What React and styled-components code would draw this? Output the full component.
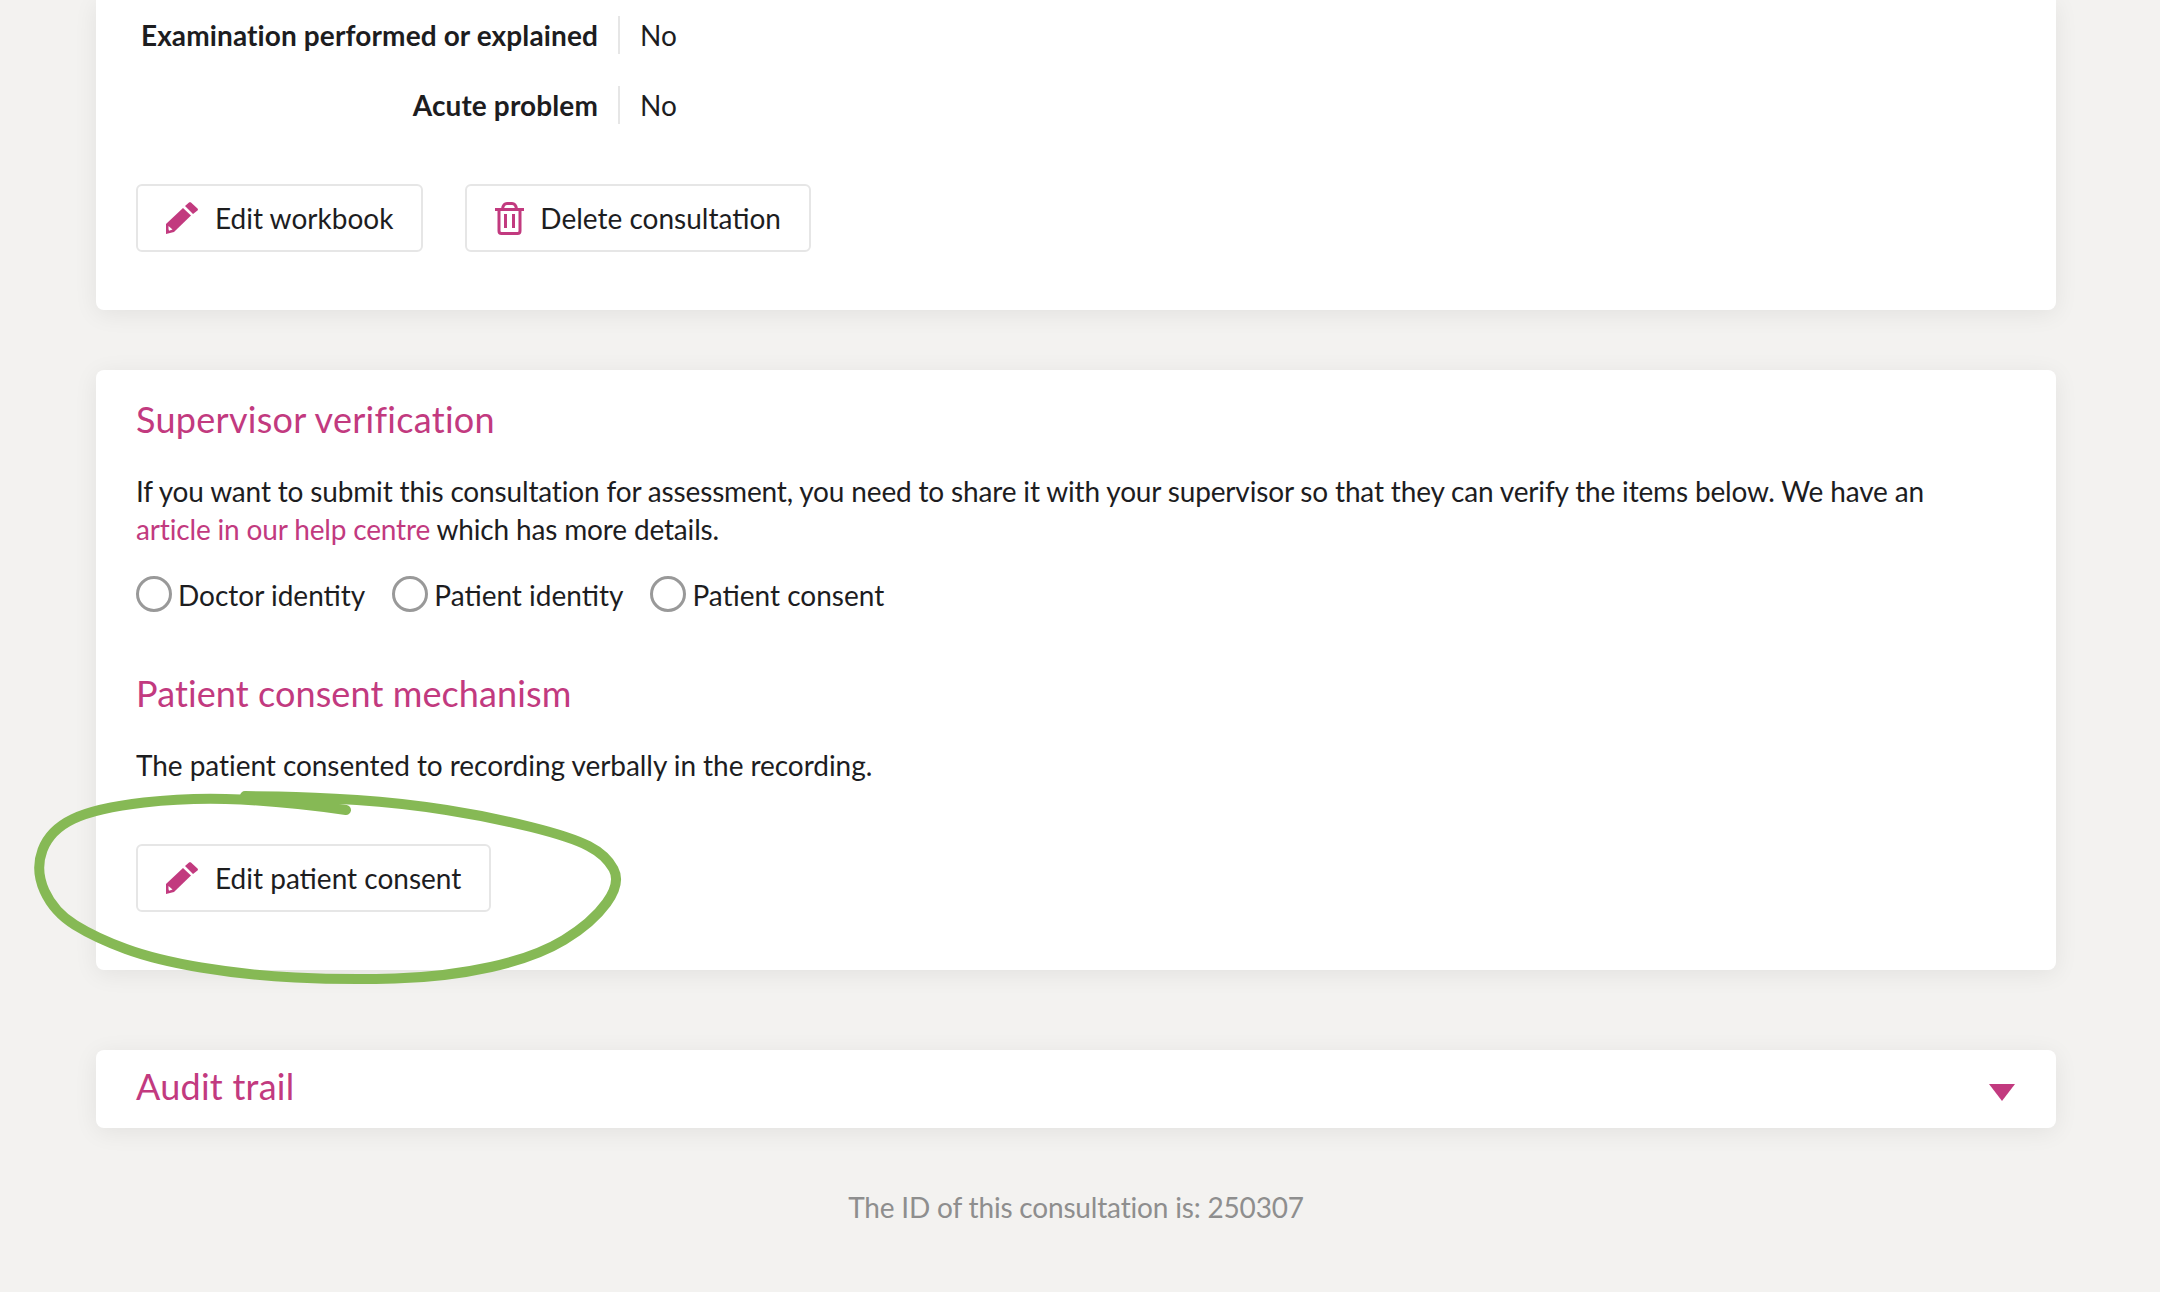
import React from 'react';
import styled, { createGlobalStyle } from 'styled-components';

const PINK = '#c23a7f';

const GlobalStyle = createGlobalStyle`
  html, body {
    margin: 0;
    padding: 0;
    background: #f3f2f0;
    font-family: Lato, "Open Sans", sans-serif;
    color: #1d1d1f;
  }
`;

const Page = styled.div`
  position: relative;
  height: 1292px;
  overflow: hidden;
  padding: 0 104px 0 96px;
  display: flex;
  flex-direction: column;
`;

const Card = styled.section`
  background: #fff;
  border-radius: ${props => (props.$top ? '0 0 8px 8px' : '8px')};
  box-shadow: 0 4px 24px rgba(0, 0, 0, 0.07);
  padding: ${props => props.$padding};
  margin-bottom: ${props => props.$gap || '0'};
`;

const FactRow = styled.div`
  display: flex;
  height: 38px;
  margin-bottom: 32px;
`;

const FactLabel = styled.div`
  width: 482px;
  padding-right: 20px;
  box-sizing: border-box;
  text-align: right;
  font-size: 28px;
  line-height: 38px;
  font-weight: 700;
  letter-spacing: 0.12px;
`;

const FactValue = styled.div`
  border-left: 2px solid #e6e6e6;
  padding-left: 20px;
  font-size: 28px;
  line-height: 38px;
`;

const ButtonRow = styled.div`
  display: flex;
  gap: 42px;
  margin-top: ${props => props.$top};
`;

const Button = styled.button`
  display: flex;
  align-items: center;
  height: 68px;
  padding: 0 28px;
  gap: ${props => props.$gap};
  background: #fff;
  border: 2px solid #e6e6e6;
  border-radius: 6px;
  font-family: inherit;
  font-size: 28px;
  color: #1d1d1f;
`;

const Heading = styled.h2`
  margin: ${props => props.$margin};
  font-size: 36px;
  line-height: 44px;
  font-weight: 400;
  letter-spacing: ${props => props.$tracking || '0.1px'};
  color: ${PINK};
`;

const Paragraph = styled.p`
  margin: ${props => props.$margin};
  max-width: 1800px;
  font-size: 28px;
  line-height: 38px;
  letter-spacing: ${props => props.$tracking};
`;

const TextLink = styled.a`
  color: ${PINK};
  text-decoration: none;
`;

const Checks = styled.div`
  display: flex;
  gap: 27px;
  margin-top: 28px;
`;

const Check = styled.label`
  display: flex;
  align-items: center;
  gap: 6px;
  font-size: 28px;
  line-height: 38px;
`;

const Circle = styled.span`
  width: 36px;
  height: 36px;
  margin-top: -2px;
  box-sizing: border-box;
  border: 3px solid #999;
  border-radius: 50%;
`;

const AuditBar = styled.div`
  display: flex;
  align-items: center;
  justify-content: space-between;
  height: 78px;
  padding: 0 41px 0 40px;
`;

const Caret = styled.span`
  width: 0;
  height: 0;
  border-left: 13px solid transparent;
  border-right: 13px solid transparent;
  border-top: 17px solid ${PINK};
  margin-top: 6px;
`;

const Footer = styled.div`
  margin-top: 60px;
  text-align: center;
  font-size: 28px;
  line-height: 38px;
  letter-spacing: -0.18px;
  color: #8e8e8e;
`;

const Scribble = styled.svg`
  position: absolute;
  left: 0;
  top: 0;
  pointer-events: none;
`;

const PencilIcon = () => (
  <svg width="32" height="32" viewBox="0 0 32 32" fill={PINK}>
    <path d="M17 6 25 13.5 8 30 0 32V22Z" />
    <path d="M19 4 23 .6C23.6 0 24.5 0 25 .6L31.5 6.4C32.1 7 32.1 7.8 31.5 8.4L27 12Z" />
    <path d="M2.5 24 6.5 27.5 3 28.8 2.5 27Z" fill="#fff" />
  </svg>
);

const TrashIcon = () => (
  <svg width="29" height="33" viewBox="0 0 29 33" fill="none" stroke={PINK} strokeWidth="3">
    <path d="M0 7.5H29" />
    <path d="M7.5 7C8 3.5 9.5 1.5 12 1.5H17C19.5 1.5 21 3.5 21.5 7" />
    <path d="M4 7.5V29C4 30.6 5 31.5 6.4 31.5H22.6C24 31.5 25 30.6 25 29V7.5" />
    <path d="M10.5 12V26M18.5 12V26" />
  </svg>
);

// centre line of the hand drawn ring, read off the screenshot
const RING = [
  [346, 810], [290, 802], [192, 797], [96, 808], [50, 830], [35, 870], [54, 912],
  [96, 938], [156, 960], [246, 975], [344, 980], [446, 977], [536, 957], [592, 923],
  [621, 883], [606, 855], [571, 837], [491, 817], [402, 803], [312, 797], [245, 796],
];

const ringPath = points => {
  let d = `M${points[0][0]} ${points[0][1]}`;
  for (let i = 1; i < points.length - 1; i++) {
    const [x, y] = points[i];
    const [nx, ny] = points[i + 1];
    d += `Q${x} ${y} ${(x + nx) / 2} ${(y + ny) / 2}`;
  }
  const last = points[points.length - 1];
  return `${d}L${last[0]} ${last[1]}`;
};

const App = () => (
  <Page>
    <GlobalStyle />
    <Card $top $padding="16px 40px 58px" $gap="60px">
      <FactRow>
        <FactLabel>Examination performed or explained</FactLabel>
        <FactValue>No</FactValue>
      </FactRow>
      <FactRow>
        <FactLabel>Acute problem</FactLabel>
        <FactValue>No</FactValue>
      </FactRow>
      <ButtonRow $top="60px">
        <Button $gap="17px"><PencilIcon />Edit workbook</Button>
        <Button $gap="16px"><TrashIcon />Delete consultation</Button>
      </ButtonRow>
    </Card>
    <Card $padding="27px 40px 58px" $gap="80px">
      <Heading $margin="0" $tracking="0.28px">Supervisor verification</Heading>
      <Paragraph $margin="31px 0 0" $tracking="-0.16px">
        If you want to submit this consultation for assessment, you need to share it with your supervisor so that they can verify the items below. We have an <TextLink href="#">article in our help centre</TextLink> which has more details.
      </Paragraph>
      <Checks>
        <Check><Circle />Doctor identity</Check>
        <Check><Circle />Patient identity</Check>
        <Check><Circle />Patient consent</Check>
      </Checks>
      <Heading $margin="57px 0 0">Patient consent mechanism</Heading>
      <Paragraph $margin="31px 0 0" $tracking="-0.05px">The patient consented to recording verbally in the recording.</Paragraph>
      <ButtonRow $top="60px">
        <Button $gap="17px"><PencilIcon />Edit patient consent</Button>
      </ButtonRow>
    </Card>
    <Card>
      <AuditBar>
        <Heading $margin="0 0 6px" $tracking="0.25px">Audit trail</Heading>
        <Caret />
      </AuditBar>
    </Card>
    <Footer>The ID of this consultation is: 250307</Footer>
    <Scribble width="2160" height="1292" fill="none">
      <path d={ringPath(RING)} stroke="#86b955" strokeWidth="10" strokeLinecap="round" />
    </Scribble>
  </Page>
);

export default App;
